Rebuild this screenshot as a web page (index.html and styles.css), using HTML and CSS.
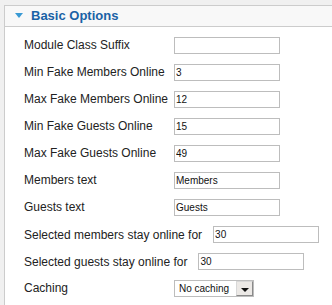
FILE: index.html
```html
<!doctype html>
<html lang="en">
<head>
	<meta charset="utf-8">
	<title>Basic Options</title>
	<link rel="stylesheet" href="styles.css">
</head>
<body>
	<div class="pane">
		<h3 class="toggler"><span class="arrow"></span>Basic Options</h3>
		<div class="paramlist">
			<label class="key">Module Class Suffix</label>
			<input type="text" class="text">

			<label class="key">Min Fake Members Online</label>
			<input type="text" class="text" value="3">

			<label class="key">Max Fake Members Online</label>
			<input type="text" class="text" value="12">

			<label class="key">Min Fake Guests Online</label>
			<input type="text" class="text" value="15">

			<label class="key">Max Fake Guests Online</label>
			<input type="text" class="text" value="49">

			<label class="key">Members text</label>
			<input type="text" class="text" value="Members">

			<label class="key">Guests text</label>
			<input type="text" class="text" value="Guests">

			<div class="wide">
				<label>Selected members stay online for</label>
				<input type="text" class="text" value="30">
			</div>

			<div class="wide">
				<label>Selected guests stay online for</label>
				<input type="text" class="text" value="30">
			</div>

			<label class="key">Caching</label>
			<div class="select">
				<span class="current">No caching</span>
				<span class="drop"><span class="tri"></span></span>
			</div>
		</div>
	</div>
</body>
</html>
```

FILE: styles.css
```css
body {
	margin: 0;
	background-color: #f0f0f0;
	font-family: "Liberation Sans", Arial, sans-serif;
	font-size: 12px;
	color: #222;
}

.pane {
	margin: 5px 0 0 4px;
	height: 300px;
	background-color: #fff;
	border: 1px solid #ccc;
	border-right: none;
	border-bottom: none;
}

/* заголовок панели */
.toggler {
	margin: 0;
	height: 20px;
	line-height: 20px;
	padding-left: 10px;
	background-color: #f8f8f8;
	border-bottom: 1px solid #ccc;
	font-size: 13px;
	font-weight: bold;
	color: #1a62a6;
}

.arrow {
	display: inline-block;
	width: 0;
	height: 0;
	border-left: 4px solid transparent;
	border-right: 4px solid transparent;
	border-top: 5px solid #3a9ad4;
	margin-right: 8px;
	vertical-align: 2px;
}

/* список параметров */
.paramlist {
	display: grid;
	grid-template-columns: 150px auto;
	row-gap: 10px;
	padding: 10px 0 0 19px;
	align-items: center;
	justify-items: start;
}

.key {
	line-height: 17px;
}

.wide {
	grid-column: 1 / span 2;
	display: flex;
	align-items: center;
	gap: 11px;
}

.text {
	box-sizing: border-box;
	width: 106px;
	height: 17px;
	margin: 0;
	padding: 0 1px;
	border: 1px solid #bdbdbd;
	font-family: "Liberation Sans", Arial, sans-serif;
	font-size: 10px;
	color: #111;
	outline: none;
}

.select {
	box-sizing: border-box;
	display: flex;
	align-items: center;
	width: 80px;
	height: 17px;
	border: 1px solid #bdbdbd;
	font-size: 10px;
	color: #111;
}

.current {
	flex: 1;
	padding-left: 4px;
}

.drop {
	box-sizing: border-box;
	display: flex;
	align-items: center;
	justify-content: center;
	width: 17px;
	height: 15px;
	background-color: #ece9e6;
	border: 1px solid #8a8a8a;
	border-top-color: #d8d8d8;
	border-left-color: #d8d8d8;
}

.tri {
	width: 0;
	height: 0;
	border-left: 4px solid transparent;
	border-right: 4px solid transparent;
	border-top: 4px solid #111;
	margin-top: 3px;
}
```
